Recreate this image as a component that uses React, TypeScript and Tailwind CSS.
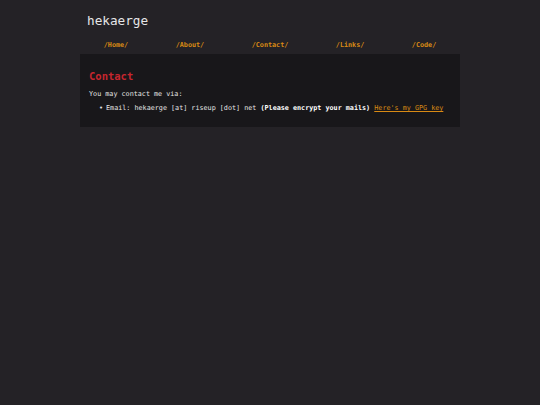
export default function App() {
  const nav = ["/Home/", "/About/", "/Contact/", "/Links/", "/Code/"]

  return (
    <div className="min-h-screen bg-[#242226] font-['DejaVu_Sans_Mono',monospace] text-[#e4e4e4]">
      <div className="mx-auto w-[380px]">
        <h1 className="px-[7px] pt-[13px] text-[12.7px] leading-[16px] text-[#e6e6e6]">hekaerge</h1>

        <nav className="mt-[10px] flex justify-around">
          {nav.map((item) => (
            <a key={item} className="text-[6.75px] font-bold leading-[12px] text-[#d98a14]">
              {item}
            </a>
          ))}
        </nav>

        <section className="mt-[3px] bg-[#18171a] px-[9px] pb-[14px] pt-[16px]">
          <h2 className="text-[10.5px] font-bold leading-[13px] text-[#c4262e]">Contact</h2>
          <p className="mt-[7px] text-[6.75px] leading-[9px]">You may contact me via:</p>
          <ul className="mt-[5px] text-[6.75px] leading-[9px]">
            <li className="flex pl-[10px]">
              <span className="w-[7px]">•</span>
              <span>
                Email: hekaerge [at] riseup [dot] net <b className="text-white">(Please encrypt your mails)</b>{" "}
                <a className="text-[#d98a14] underline">Here's my GPG key</a>
              </span>
            </li>
          </ul>
        </section>
      </div>
    </div>
  )
}
